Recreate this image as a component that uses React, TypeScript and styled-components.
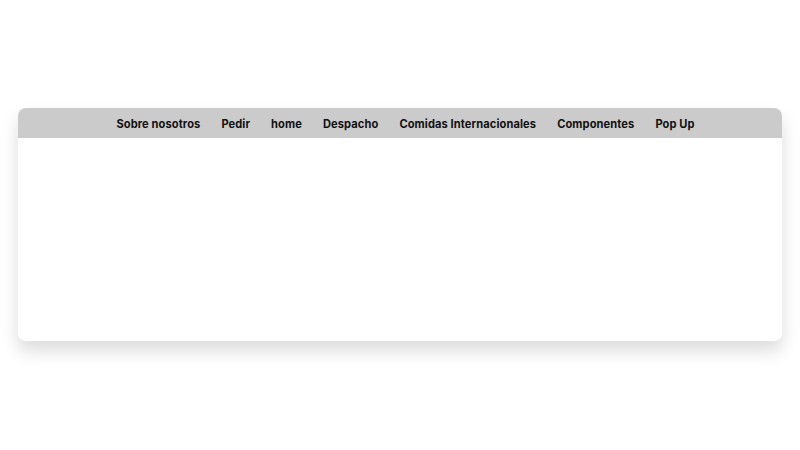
import styled, { createGlobalStyle } from 'styled-components';

const GlobalStyle = createGlobalStyle`
  body {
    margin: 0;
    background: #ffffff;
    font-family: "Inter", "Liberation Sans", sans-serif;
  }
`;

const Page = styled.div`
  width: 800px;
  height: 450px;
  padding: 108px 18px 0;
  box-sizing: border-box;
`;

const Card = styled.div`
  height: 233px;
  background: #ffffff;
  border-radius: 8px;
  overflow: hidden;
  box-shadow: 0 10px 18px rgba(0, 0, 0, 0.14);
`;

const NavBar = styled.nav`
  height: 30px;
  box-sizing: border-box;
  background: #cbcbcb;
  display: flex;
  justify-content: center;
  align-items: center;
  gap: 21px;
  padding: 2px 0 0 11px;
`;

const NavLink = styled.a`
  font-size: 11.1px;
  font-weight: 700;
  letter-spacing: 0.1px;
  color: #111;
  text-decoration: none;
  cursor: pointer;
`;

const links = [
  'Sobre nosotros',
  'Pedir',
  'home',
  'Despacho',
  'Comidas Internacionales',
  'Componentes',
  'Pop Up',
];

const App = () => (
  <>
    <GlobalStyle />
    <Page>
      <Card>
        <NavBar>
          {links.map((l) => (
            <NavLink key={l}>{l}</NavLink>
          ))}
        </NavBar>
      </Card>
    </Page>
  </>
);

export default App;
